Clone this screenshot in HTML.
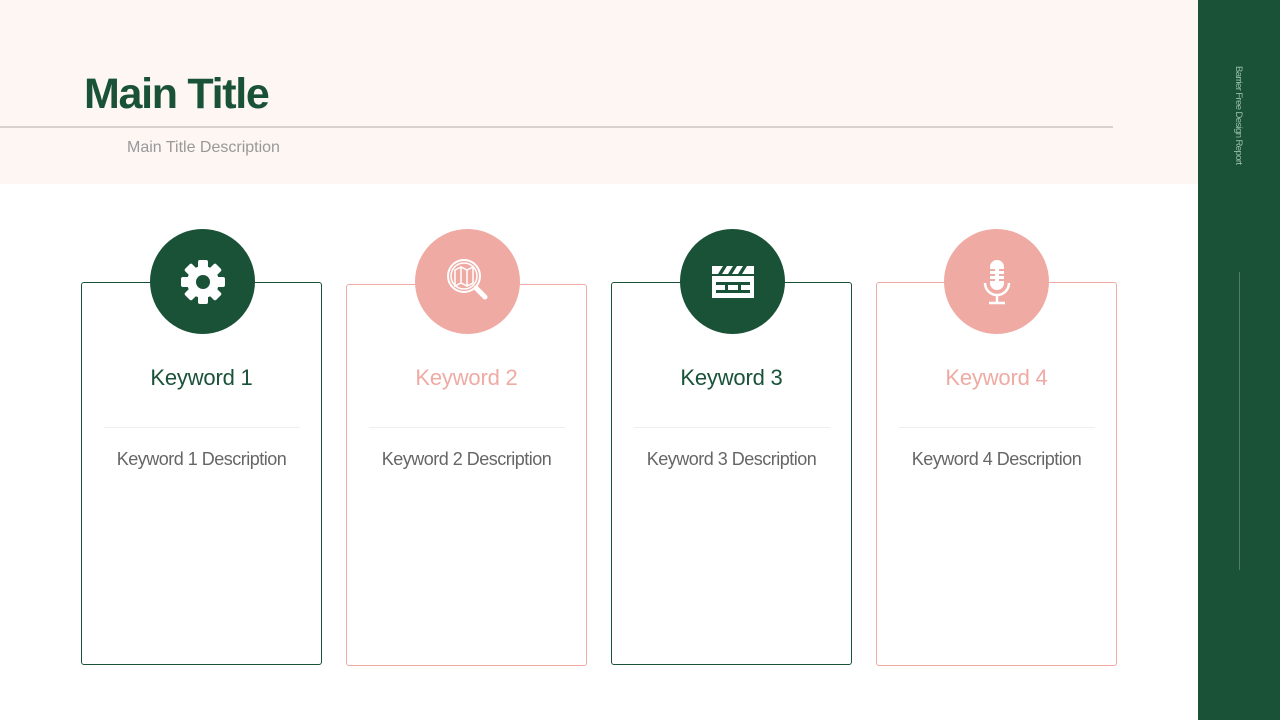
<!DOCTYPE html>
<html><head><style>
*{margin:0;padding:0;box-sizing:border-box}
body{width:1280px;height:720px;position:relative;background:#fff;font-family:"Liberation Sans","Noto Sans CJK KR",sans-serif;overflow:hidden}
.top{position:absolute;left:0;top:0;width:1198px;height:184px;background:#fdf6f2}
.title{position:absolute;left:84px;top:70px;font-size:43px;font-weight:bold;color:#1a5238;letter-spacing:-1.3px}
.hl{position:absolute;left:0;top:126px;width:1113px;height:2px;background:#d8d2cc}
.desc{position:absolute;left:127px;top:139px;font-size:16px;color:#999}
.side{position:absolute;left:1198px;top:0;width:82px;height:720px;background:#1a5238}
.vt{position:absolute;left:1233px;top:66px;writing-mode:vertical-rl;font-size:9.5px;color:#9dbfae;letter-spacing:-0.6px}
.vl{position:absolute;left:1239px;top:272px;width:1px;height:298px;background:#4d7d66}
.card{position:absolute;width:241px;border:1.5px solid;border-radius:3px;background:#fff}
.circ{position:absolute;width:105px;height:105px;border-radius:50%;display:flex;align-items:center;justify-content:center}
.kw{position:absolute;width:241px;text-align:center;top:365px;font-size:22px;letter-spacing:-0.2px}
.dv{position:absolute;width:196px;height:1px;background:#eee;top:427px}
.kd{position:absolute;width:241px;text-align:center;top:449px;font-size:18px;color:#666;letter-spacing:-0.5px}
.g{color:#1a5238;border-color:#1a5238}.p{color:#f0aaa4;border-color:#f0aaa4}
</style></head><body>
<div class="top"></div>
<div class="title">Main Title</div>
<div class="hl"></div>
<div class="desc">Main Title Description</div>
<div class="side"></div>
<div class="vt">Barrier Free Design Report</div>
<div class="vl"></div>

<div class="card g" style="left:81px;top:282px;height:383px"></div>
<div class="card p" style="left:346px;top:284px;height:382px"></div>
<div class="card g" style="left:611px;top:282px;height:383px"></div>
<div class="card p" style="left:876px;top:282px;height:384px"></div>

<div class="circ" style="left:150px;top:229px;background:#1a5238">
<svg width="48" height="48" viewBox="0 0 48 48"><g fill="#fff" transform="translate(24 24)">
<rect x="-5" y="-22" width="10" height="44" rx="2"/><rect x="-5" y="-22" width="10" height="44" rx="2" transform="rotate(45)"/><rect x="-5" y="-22" width="10" height="44" rx="2" transform="rotate(90)"/><rect x="-5" y="-22" width="10" height="44" rx="2" transform="rotate(135)"/>
<circle r="16"/></g><circle cx="24" cy="24" r="7" fill="#1a5238"/></svg></div>
<div class="circ" style="left:415px;top:229px;background:#f0aaa4">
<svg width="56" height="56" viewBox="0 0 56 56" fill="none" stroke="#fff" stroke-width="2"><circle cx="24" cy="22" r="16"/><circle cx="24" cy="22" r="13" stroke-width="1.5"/><path d="M15 16l6-3 6 3 6-3v16l-6 3-6-3-6 3z M21 13v16 M27 16v16" stroke-width="1.5"/><path d="M36 34l9 9" stroke-width="5" stroke-linecap="round"/></svg></div>
<div class="circ" style="left:680px;top:229px;background:#1a5238">
<svg width="46" height="40" viewBox="0 0 46 40"><g fill="#fff"><path d="M2 4h42v8H2z"/><path d="M2 14h42v22H2z"/></g><g fill="#1a5238"><path d="M8 12l5-8h4l-5 8zM18 12l5-8h4l-5 8zM28 12l5-8h4l-5 8z"/><rect x="6" y="20" width="34" height="3"/><rect x="6" y="28" width="34" height="3"/><rect x="15" y="23" width="3" height="5"/><rect x="28" y="23" width="3" height="5"/></g></svg></div>
<div class="circ" style="left:944px;top:229px;background:#f0aaa4">
<svg width="40" height="50" viewBox="0 0 40 50"><rect x="13" y="3" width="14" height="30" rx="7" fill="#fff"/><g stroke="#f0aaa4" stroke-width="2"><path d="M13 13h5M13 18h5M13 23h5M22 13h5M22 18h5M22 23h5"/></g><path d="M8 26a12 12 0 0 0 24 0" fill="none" stroke="#fff" stroke-width="2.5"/><path d="M20 38v7M12 46h16" stroke="#fff" stroke-width="2.5"/></svg></div>

<div class="kw g" style="left:81px">Keyword 1</div>
<div class="kw p" style="left:346px">Keyword 2</div>
<div class="kw g" style="left:611px">Keyword 3</div>
<div class="kw p" style="left:876px">Keyword 4</div>
<div class="dv" style="left:104px"></div>
<div class="dv" style="left:369px"></div>
<div class="dv" style="left:634px"></div>
<div class="dv" style="left:899px"></div>
<div class="kd" style="left:81px">Keyword 1 Description</div>
<div class="kd" style="left:346px">Keyword 2 Description</div>
<div class="kd" style="left:611px">Keyword 3 Description</div>
<div class="kd" style="left:876px">Keyword 4 Description</div>
</body></html>
